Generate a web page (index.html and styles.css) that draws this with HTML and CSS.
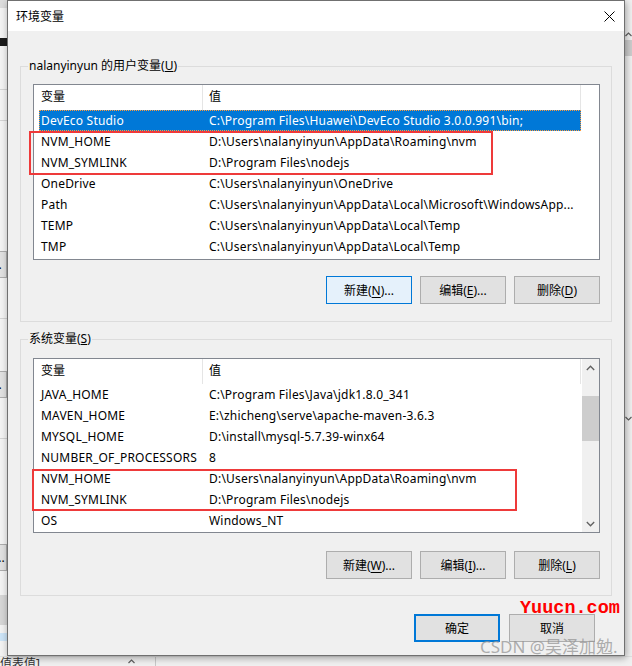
FILE: index.html
```html
<!DOCTYPE html>
<html lang="zh-CN">
<head>
<meta charset="utf-8">
<title>环境变量</title>
<link rel="stylesheet" href="styles.css">
</head>
<body>
<div class="desk">
  <div class="behind">
    <div class="bg-left">
      <div class="bl-top"></div>
      <div class="bl-dark"></div>
      <div class="bl-line l1"></div>
      <div class="bl-line l2"></div>
      <div class="bl-btn b1">).</div>
      <div class="bl-line l3"></div>
      <div class="bl-btn b2">).</div>
      <div class="bl-line l4"></div>
      <div class="bl-btn b3">...</div>
      <div class="bl-gray"></div>
      <div class="bl-blue"></div>
    </div>
    <div class="bg-mid"></div>
    <div class="bg-right">
      <svg class="br-chev" width="7" height="5" viewBox="0 0 7 5"><polyline points="0.5,4 3.5,1 6.5,4" fill="none" stroke="#606060" stroke-width="1.2"/></svg>
      <div class="br-thumb"></div>
      <div class="br-space"></div>
      <svg class="br-chev" width="7" height="5" viewBox="0 0 7 5"><polyline points="0.5,1 3.5,4 6.5,1" fill="none" stroke="#606060" stroke-width="1.2"/></svg>
    </div>
    <div class="bg-bottom">
      <span class="bb-text">[值表值]</span>
      <svg class="bb-chev" width="7" height="5" viewBox="0 0 7 5"><polyline points="0.5,4 3.5,1 6.5,4" fill="none" stroke="#606060" stroke-width="1.2"/></svg>
      <span class="bb-sep"></span>
    </div>
  </div>

  <div class="dialog">
    <div class="titlebar">
      <span class="title">环境变量</span>
      <svg class="close" width="11" height="11" viewBox="0 0 11 11"><path d="M0.5 0.5 L10.5 10.5 M10.5 0.5 L0.5 10.5" stroke="#000" stroke-width="1"/></svg>
    </div>
    <div class="body">
      <div class="group g1">
        <span class="legend">nalanyinyun 的用户变量(<u>U</u>)</span>
        <div class="list l-user">
          <div class="lv-main">
            <div class="lv-head"><div class="h1">变量</div><div class="h2">值</div></div>
            <div class="row sel"><span class="c1">DevEco Studio</span><span class="c2">C:\Program Files\Huawei\DevEco Studio 3.0.0.991\bin;</span></div>
            <div class="row"><span class="c1">NVM_HOME</span><span class="c2">D:\Users\nalanyinyun\AppData\Roaming\nvm</span></div>
            <div class="row"><span class="c1">NVM_SYMLINK</span><span class="c2">D:\Program Files\nodejs</span></div>
            <div class="row"><span class="c1">OneDrive</span><span class="c2">C:\Users\nalanyinyun\OneDrive</span></div>
            <div class="row"><span class="c1">Path</span><span class="c2">C:\Users\nalanyinyun\AppData\Local\Microsoft\WindowsApp...</span></div>
            <div class="row"><span class="c1">TEMP</span><span class="c2">C:\Users\nalanyinyun\AppData\Local\Temp</span></div>
            <div class="row"><span class="c1">TMP</span><span class="c2">C:\Users\nalanyinyun\AppData\Local\Temp</span></div>
          </div>
        </div>
        <div class="btns">
          <button class="btn hot">新建(<u>N</u>)...</button>
          <button class="btn">编辑(<u>E</u>)...</button>
          <button class="btn">删除(<u>D</u>)</button>
        </div>
      </div>

      <div class="group g2">
        <span class="legend">系统变量(<u>S</u>)</span>
        <div class="list l-sys">
          <div class="lv-main">
            <div class="lv-head"><div class="h1">变量</div><div class="h2">值</div></div>
            <div class="row"><span class="c1">JAVA_HOME</span><span class="c2">C:\Program Files\Java\jdk1.8.0_341</span></div>
            <div class="row"><span class="c1">MAVEN_HOME</span><span class="c2">E:\zhicheng\serve\apache-maven-3.6.3</span></div>
            <div class="row"><span class="c1">MYSQL_HOME</span><span class="c2">D:\install\mysql-5.7.39-winx64</span></div>
            <div class="row"><span class="c1">NUMBER_OF_PROCESSORS</span><span class="c2">8</span></div>
            <div class="row"><span class="c1">NVM_HOME</span><span class="c2">D:\Users\nalanyinyun\AppData\Roaming\nvm</span></div>
            <div class="row"><span class="c1">NVM_SYMLINK</span><span class="c2">D:\Program Files\nodejs</span></div>
            <div class="row"><span class="c1">OS</span><span class="c2">Windows_NT</span></div>
          </div>
          <div class="sb">
            <div class="sb-arrow"><svg width="9" height="6" viewBox="0 0 9 6"><polyline points="0.8,5 4.5,1.2 8.2,5" fill="none" stroke="#606060" stroke-width="1.3"/></svg></div>
            <div class="sb-track"><div class="sb-thumb"></div></div>
            <div class="sb-arrow"><svg width="9" height="6" viewBox="0 0 9 6"><polyline points="0.8,1 4.5,4.8 8.2,1" fill="none" stroke="#606060" stroke-width="1.3"/></svg></div>
          </div>
        </div>
        <div class="btns">
          <button class="btn">新建(<u>W</u>)...</button>
          <button class="btn">编辑(<u>I</u>)...</button>
          <button class="btn">删除(<u>L</u>)</button>
        </div>
      </div>

      <div class="footer">
        <button class="btn default">确定</button>
        <button class="btn">取消</button>
      </div>
    </div>
  </div>

  <div class="redbox r1"></div>
  <div class="redbox r2"></div>
  <div class="wm1">Yuucn.com</div>
  <div class="wm2">CSDN @吴泽加勉.</div>
</div>
</body>
</html>
```

FILE: styles.css
```css
* { box-sizing: border-box; }
html, body { margin: 0; padding: 0; }
body {
  width: 632px;
  height: 666px;
  overflow: hidden;
  background: #f0f0f0;
  font-family: "Noto Sans", "Noto Sans CJK SC", sans-serif;
  font-size: 12px;
  color: #000;
}
.desk { position: relative; width: 632px; height: 666px; }

/* background windows */
.behind {
  display: grid;
  grid-template-columns: 7px 1fr 7px;
  grid-template-rows: 656px 10px;
  width: 632px;
  height: 666px;
}
.bg-left { background: #f3f3f3; display: flex; flex-direction: column; overflow: hidden; }
.bl-top { height: 8px; background: #dcdcdc; }
.bl-dark { height: 8px; margin-top: 30px; background: #1a1a1a; }
.bl-line { height: 1px; background: #d4d4d4; }
.l1 { margin-top: 43px; }
.l2 { margin-top: 30px; }
.bl-btn {
  height: 27px; background: #e1e1e1; border: 1px solid #adadad; border-left: 0;
  font-size: 12px; line-height: 25px; text-indent: -5px; white-space: nowrap; overflow: hidden;
}
.b1 { margin-top: 130px; }
.l3 { margin-top: 40px; }
.b2 { margin-top: 52px; }
.l4 { margin-top: 40px; }
.b3 { margin-top: 105px; }
.bl-gray { height: 30px; margin-top: 24px; background: #d6d6d6; }
.bl-blue { height: 8px; margin-top: 8px; background: #cce4f7; }
.bg-mid { background: #f0f0f0; }
.bg-right { background: #f0f0f0; display: flex; flex-direction: column; align-items: center; }
.br-chev { margin-top: 32px; flex: none; }
.br-thumb { width: 7px; height: 16px; margin-top: 3px; background: #cdcdcd; }
.br-space { height: 328px; }
.bg-bottom {
  grid-column: 1 / 4;
  background: #f0f0f0;
  display: flex; align-items: center;
  border-top: 1px solid #e0e0e0;
  overflow: hidden;
}
.bb-text { font-size: 12px; line-height: 10px; margin-left: -4px; margin-top: 4px; color: #333; }
.bb-chev { margin-left: 88px; }
.bb-sep { width: 1px; height: 10px; background: #c8c8c8; margin-left: 20px; }

/* dialog */
.dialog {
  position: absolute;
  left: 7px; top: 0;
  width: 618px; height: 656px;
  border: 1px solid #707070;
  background: #f0f0f0;
  box-shadow: 1px 2px 7px rgba(0,0,0,0.35);
  display: flex; flex-direction: column;
}
.titlebar {
  height: 30px; flex: none;
  background: #fff;
  display: flex; align-items: center; justify-content: space-between;
  padding: 0 9px 0 8px;
}
.title { font-size: 12px; }
.close { display: block; }
.body { padding: 35px 12px 0 12px; display: flex; flex-direction: column; }

.group { position: relative; border: 1px solid #dcdcdc; }
.g1 { padding: 17px 11px 17px 12px; }
.g2 { margin-top: 17px; padding: 18px 11px 16px 12px; }
.legend {
  position: absolute; left: 7px; top: -9px;
  background: #f0f0f0; padding: 0 1px;
  line-height: 16px; white-space: nowrap;
}

.list { border: 1px solid #828790; background: #fff; display: flex; overflow: hidden; }
.l-user { height: 176px; }
.l-sys { height: 175px; }
.lv-main { flex: 1; min-width: 0; }
.lv-head { display: flex; height: 25px; }
.lv-head .h1 { width: 168px; padding-left: 7px; line-height: 24px; }
.lv-head .h2 {
  width: 379px; padding-left: 6px; line-height: 24px;
  border-left: 1px solid #e5e5e5; border-right: 1px solid #e5e5e5;
}
.row {
  display: flex; height: 21px; line-height: 21px;
  margin-left: 5px; width: 542px;
  white-space: nowrap;
  letter-spacing: 0.2px;
}
.row .c1 { width: 163px; padding-left: 2px; overflow: hidden; flex: none; }
.row .c2 { flex: 1; padding-left: 7px; overflow: hidden; }
.row.sel { background: #0078d7; color: #fff; outline: 1px dotted #ff9b3b; outline-offset: -1px; }

.sb { width: 17px; flex: none; background: #f0f0f0; display: flex; flex-direction: column; }
.sb-arrow { height: 17px; display: flex; align-items: center; justify-content: center; flex: none; }
.sb-track { flex: 1; }
.sb-thumb { height: 45px; margin-top: 20px; background: #cdcdcd; }

.btns { display: flex; justify-content: flex-end; gap: 8px; margin-top: 16px; }
.g2 .btns { margin-top: 18px; }
.btn {
  width: 86px; height: 28px; padding: 0;
  background: #e1e1e1; border: 1px solid #adadad;
  font-family: inherit; font-size: 12px; color: #000;
  display: flex; align-items: center; justify-content: center;
}
.btn.hot { background: #e5f1fb; border-color: #0078d7; }
.btn.default { border: 2px solid #0078d7; }
.btn u { text-underline-offset: 2px; }

.footer { display: flex; justify-content: flex-end; gap: 9px; margin-top: 18px; padding-right: 17px; }

/* annotations */
.redbox { position: absolute; border: 2px solid #ee3a3a; }
.r1 { left: 29px; top: 131px; width: 464px; height: 44px; }
.r2 { left: 32px; top: 469px; width: 485px; height: 42px; }
.wm1 {
  position: absolute; left: 520px; top: 599px;
  font-family: "Liberation Mono", monospace; font-weight: bold;
  font-size: 18.5px; line-height: 20px; color: #ff0000;
}
.wm2 {
  position: absolute; left: 480px; top: 637px;
  font-family: "Noto Sans", "Noto Sans CJK SC", sans-serif;
  font-size: 17px; line-height: 20px; color: rgba(150,150,150,0.75);
  white-space: nowrap;
}
```
